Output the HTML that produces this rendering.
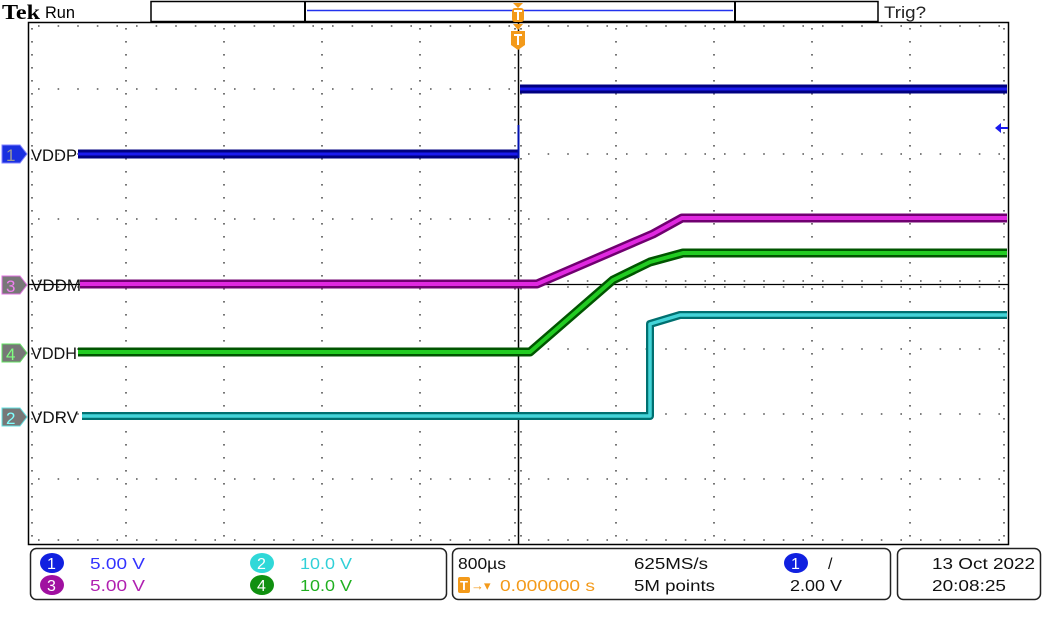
<!DOCTYPE html>
<html><head><meta charset="utf-8"><style>
html,body{margin:0;padding:0;background:#fff;width:1050px;height:628px;overflow:hidden}
svg{display:block}
text{font-family:"Liberation Sans",sans-serif}
</style></head><body>
<svg width="1050" height="628" viewBox="0 0 1050 628" xmlns="http://www.w3.org/2000/svg">
<!-- top bar -->
<text x="2" y="19" font-size="21" font-weight="bold" style="font-family:'Liberation Serif',serif" textLength="38" lengthAdjust="spacingAndGlyphs">Tek</text>
<text x="45" y="18" font-size="17" textLength="30" lengthAdjust="spacingAndGlyphs">Run</text>
<rect x="151" y="1.5" width="727" height="20" fill="#fff" stroke="#000" stroke-width="1.5"/>
<line x1="305" y1="1" x2="305" y2="22" stroke="#000" stroke-width="2"/>
<line x1="735" y1="1" x2="735" y2="22" stroke="#000" stroke-width="2"/>
<line x1="307" y1="10.5" x2="733" y2="10.5" stroke="#2233ee" stroke-width="1.5"/>
<text x="884" y="18" font-size="17" fill="#222" textLength="42" lengthAdjust="spacingAndGlyphs">Trig?</text>
<!-- grid -->
<g stroke="#555" stroke-width="1.6">
<g stroke-dasharray="1.6 11.4">
<line x1="126" y1="28" x2="126" y2="544"/><line x1="224" y1="28" x2="224" y2="544"/><line x1="322" y1="28" x2="322" y2="544"/><line x1="420" y1="28" x2="420" y2="544"/>
<line x1="616" y1="28" x2="616" y2="544"/><line x1="714" y1="28" x2="714" y2="544"/><line x1="812" y1="28" x2="812" y2="544"/><line x1="910" y1="28" x2="910" y2="544"/>
</g>
<g stroke-dasharray="1.6 18">
<line x1="38" y1="89" x2="1008" y2="89"/><line x1="38" y1="154" x2="1008" y2="154"/><line x1="38" y1="219" x2="1008" y2="219"/>
<line x1="38" y1="349" x2="1008" y2="349"/><line x1="38" y1="414" x2="1008" y2="414"/><line x1="38" y1="479" x2="1008" y2="479"/>
</g>
<g stroke-dasharray="1.6 18"><line x1="38" y1="26" x2="1008" y2="26"/><line x1="38" y1="540" x2="1008" y2="540"/><line x1="38" y1="287" x2="1008" y2="287"/><line x1="38" y1="281" x2="1008" y2="281"/></g>
<g stroke-dasharray="1.6 11.4"><line x1="32" y1="28" x2="32" y2="544"/><line x1="1004" y1="28" x2="1004" y2="544"/><line x1="515" y1="28" x2="515" y2="544"/><line x1="521" y1="28" x2="521" y2="544"/></g>
</g>
<rect x="28.5" y="22.5" width="980" height="522" fill="none" stroke="#000" stroke-width="1.5"/>
<line x1="518.5" y1="22" x2="518.5" y2="545" stroke="#000" stroke-width="1.5"/>
<line x1="28" y1="284.5" x2="1008" y2="284.5" stroke="#000" stroke-width="1.3"/>
<!-- traces -->
<g fill="none" stroke-linejoin="round">
<polyline points="78,154 518,154" stroke="#000080" stroke-width="9"/>
<polyline points="78,154 518,154" stroke="#1a1aee" stroke-width="3"/>
<line x1="518.5" y1="125" x2="518.5" y2="158" stroke="#0010b0" stroke-width="2"/>
<polyline points="520,89 1007,89" stroke="#000080" stroke-width="9"/>
<polyline points="520,89 1007,89" stroke="#1a1aee" stroke-width="3"/>
<polyline points="82,416 650,416 650,324 680,315 1007,315" stroke="#007070" stroke-width="8"/>
<polyline points="82,416 650,416 650,324 680,315 1007,315" stroke="#44d4d8" stroke-width="3.5"/>
<polyline points="78,352 530,352 613,280 650,262 683,253 1007,253" stroke="#005500" stroke-width="9"/>
<polyline points="78,352 530,352 613,280 650,262 683,253 1007,253" stroke="#22cc22" stroke-width="4"/>
<polyline points="80,284 537,284 653,234 682,218 1007,218" stroke="#700070" stroke-width="9"/>
<polyline points="80,284 537,284 653,234 682,218 1007,218" stroke="#e028e0" stroke-width="4"/>
</g>
<!-- trigger markers -->
<g fill="#f39a1a">
<polygon points="513,3 523,3 518,8"/>
<rect x="512" y="8" width="12" height="14" rx="3"/>
<polygon points="513,24 523,24 518,30"/>
<path d="M511,31 h14 v14 l-7,5 l-7,-5z"/>
</g>
<g stroke="#fff" stroke-width="2"><line x1="514" y1="11" x2="522" y2="11"/><line x1="518" y1="11" x2="518" y2="20"/><line x1="514" y1="35" x2="522" y2="35"/><line x1="518" y1="35" x2="518" y2="45"/></g>
<polygon points="995,128 1001,123 1001,133" fill="#1a1aee"/><line x1="1000" y1="128" x2="1008" y2="128" stroke="#1a1aee" stroke-width="2"/>
<!-- channel markers -->
<g font-size="17">
<path d="M2,145 h18 l7,9 l-7,9 h-18z" fill="#1a30e0" stroke="#8080ff"/><text x="6" y="161" fill="#999">1</text>
<path d="M2,276 h18 l7,9 l-7,9 h-18z" fill="#777" stroke="#e070e0"/><text x="6" y="292" fill="#f080f0">3</text>
<path d="M2,344 h18 l7,9 l-7,9 h-18z" fill="#777" stroke="#60e060"/><text x="6" y="360" fill="#80ff80">4</text>
<path d="M2,408 h18 l7,9 l-7,9 h-18z" fill="#777" stroke="#60e0e0"/><text x="6" y="424" fill="#80ffff">2</text>
</g>
<g font-size="17" fill="#111">
<text x="31" y="161" textLength="46" lengthAdjust="spacingAndGlyphs">VDDP</text>
<text x="31" y="291" textLength="50" lengthAdjust="spacingAndGlyphs">VDDM</text>
<text x="31" y="359" textLength="46" lengthAdjust="spacingAndGlyphs">VDDH</text>
<text x="31" y="423" textLength="47" lengthAdjust="spacingAndGlyphs">VDRV</text>
</g>
<!-- bottom status -->
<g fill="none" stroke="#222" stroke-width="1.5">
<rect x="30.5" y="548.5" width="416" height="51" rx="6"/>
<rect x="452.5" y="548.5" width="438" height="51" rx="6"/>
<rect x="897.5" y="548.5" width="143" height="51" rx="6"/>
</g>
<g font-size="16">
<ellipse cx="52" cy="563" rx="12" ry="10" fill="#1020e0"/><text x="47" y="569" fill="#fff">1</text>
<text x="90" y="569" fill="#3333ff" textLength="55" lengthAdjust="spacingAndGlyphs">5.00 V</text>
<ellipse cx="52" cy="585" rx="12" ry="10" fill="#a010a0"/><text x="47" y="591" fill="#fff">3</text>
<text x="90" y="591" fill="#b020b0" textLength="55" lengthAdjust="spacingAndGlyphs">5.00 V</text>
<ellipse cx="262" cy="563" rx="12" ry="10" fill="#30d8d8"/><text x="257" y="569" fill="#fff">2</text>
<text x="300" y="569" fill="#30d0d8" textLength="52" lengthAdjust="spacingAndGlyphs">10.0 V</text>
<ellipse cx="262" cy="585" rx="12" ry="10" fill="#109010"/><text x="257" y="591" fill="#fff">4</text>
<text x="300" y="591" fill="#20b020" textLength="52" lengthAdjust="spacingAndGlyphs">10.0 V</text>
</g>
<g font-size="16" fill="#111">
<text x="458" y="569" textLength="48" lengthAdjust="spacingAndGlyphs">800µs</text>
<text x="634" y="569" textLength="74" lengthAdjust="spacingAndGlyphs">625MS/s</text>
<text x="634" y="591" textLength="81" lengthAdjust="spacingAndGlyphs">5M points</text>
<ellipse cx="796" cy="563" rx="12" ry="10" fill="#1020e0"/>
<text x="791" y="569" fill="#fff">1</text>
<text x="828" y="569">/</text>
<text x="790" y="591" textLength="52" lengthAdjust="spacingAndGlyphs">2.00 V</text>
<text x="932" y="569" textLength="103" lengthAdjust="spacingAndGlyphs">13 Oct  2022</text>
<text x="932" y="591" textLength="74" lengthAdjust="spacingAndGlyphs">20:08:25</text>
</g>
<rect x="458" y="577" width="12" height="16" rx="2" fill="#f39a1a"/>
<text x="460" y="590" font-size="13" fill="#fff" font-weight="bold">T</text>
<text x="471" y="590" font-size="13" fill="#f39a1a">→▾</text>
<text x="500" y="591" font-size="16" fill="#f39a1a" textLength="95" lengthAdjust="spacingAndGlyphs">0.000000 s</text>
</svg>
</body></html>
